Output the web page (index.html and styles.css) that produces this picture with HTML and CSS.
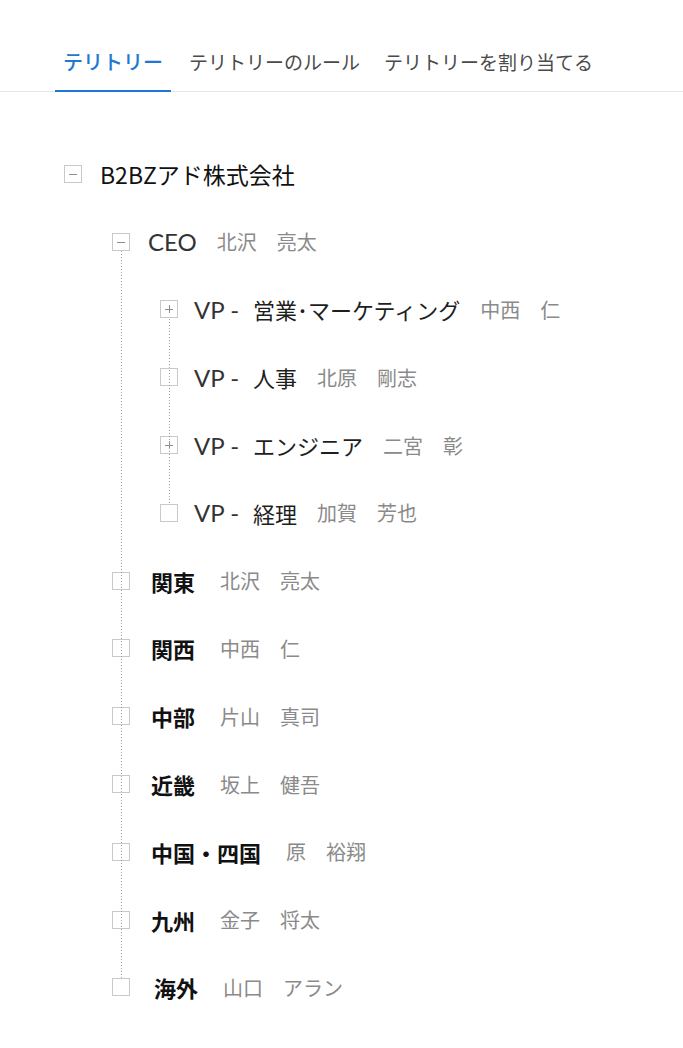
FILE: index.html
```html
<!DOCTYPE html>
<html lang="ja">
<head>
<meta charset="utf-8">
<title>テリトリー</title>
<link rel="stylesheet" href="styles.css">
</head>
<body>
<nav class="tabs">
  <a class="tab active">テリトリー</a>
  <a class="tab">テリトリーのルール</a>
  <a class="tab">テリトリーを割り当てる</a>
</nav>

<main class="tree">
  <div class="row root">
    <svg class="box" width="18" height="18" viewBox="0 0 18 18"><rect x="0.5" y="0.5" width="17" height="17" fill="#fff" stroke="#c9c9c9"/><path d="M5 9.5h8" stroke="#8c8c8c"/></svg>
    <span class="title t-root">B2BZアド株式会社</span>
  </div>

  <div class="branch lvl1">
    <div class="row">
      <svg class="box" width="18" height="18" viewBox="0 0 18 18"><rect x="0.5" y="0.5" width="17" height="17" fill="#fff" stroke="#c9c9c9"/><path d="M5 9.5h8" stroke="#8c8c8c"/></svg>
      <span class="title t-lat">CEO</span>
      <span class="owner">北沢　亮太</span>
    </div>

    <div class="branch lvl2">
      <div class="row">
        <svg class="box" width="18" height="18" viewBox="0 0 18 18"><rect x="0.5" y="0.5" width="17" height="17" fill="#fff" stroke="#c9c9c9"/><path d="M5 9.5h8M9.5 5v8" stroke="#8c8c8c"/></svg>
        <span class="title"><span class="t-lat vp">VP -</span><span class="t-vp">営業･マーケティング</span></span>
        <span class="owner">中西　仁</span>
      </div>
      <div class="row">
        <svg class="box" width="18" height="18" viewBox="0 0 18 18"><rect x="0.5" y="0.5" width="17" height="17" fill="#fff" stroke="#c9c9c9"/></svg>
        <span class="title"><span class="t-lat vp">VP -</span><span class="t-vp">人事</span></span>
        <span class="owner">北原　剛志</span>
      </div>
      <div class="row">
        <svg class="box" width="18" height="18" viewBox="0 0 18 18"><rect x="0.5" y="0.5" width="17" height="17" fill="#fff" stroke="#c9c9c9"/><path d="M5 9.5h8M9.5 5v8" stroke="#8c8c8c"/></svg>
        <span class="title"><span class="t-lat vp">VP -</span><span class="t-vp">エンジニア</span></span>
        <span class="owner">二宮　彰</span>
      </div>
      <div class="row">
        <svg class="box" width="18" height="18" viewBox="0 0 18 18"><rect x="0.5" y="0.5" width="17" height="17" fill="#fff" stroke="#c9c9c9"/></svg>
        <span class="title"><span class="t-lat vp">VP -</span><span class="t-vp">経理</span></span>
        <span class="owner">加賀　芳也</span>
      </div>
    </div>

    <div class="row">
      <svg class="box" width="18" height="18" viewBox="0 0 18 18"><rect x="0.5" y="0.5" width="17" height="17" fill="#fff" stroke="#c9c9c9"/></svg>
      <span class="title t-region">関東</span>
      <span class="owner">北沢　亮太</span>
    </div>
    <div class="row">
      <svg class="box" width="18" height="18" viewBox="0 0 18 18"><rect x="0.5" y="0.5" width="17" height="17" fill="#fff" stroke="#c9c9c9"/></svg>
      <span class="title t-region">関西</span>
      <span class="owner">中西　仁</span>
    </div>
    <div class="row">
      <svg class="box" width="18" height="18" viewBox="0 0 18 18"><rect x="0.5" y="0.5" width="17" height="17" fill="#fff" stroke="#c9c9c9"/></svg>
      <span class="title t-region">中部</span>
      <span class="owner">片山　真司</span>
    </div>
    <div class="row">
      <svg class="box" width="18" height="18" viewBox="0 0 18 18"><rect x="0.5" y="0.5" width="17" height="17" fill="#fff" stroke="#c9c9c9"/></svg>
      <span class="title t-region">近畿</span>
      <span class="owner">坂上　健吾</span>
    </div>
    <div class="row">
      <svg class="box" width="18" height="18" viewBox="0 0 18 18"><rect x="0.5" y="0.5" width="17" height="17" fill="#fff" stroke="#c9c9c9"/></svg>
      <span class="title t-region">中国・四国</span>
      <span class="owner">原　裕翔</span>
    </div>
    <div class="row">
      <svg class="box" width="18" height="18" viewBox="0 0 18 18"><rect x="0.5" y="0.5" width="17" height="17" fill="#fff" stroke="#c9c9c9"/></svg>
      <span class="title t-region">九州</span>
      <span class="owner">金子　将太</span>
    </div>
    <div class="row">
      <svg class="box" width="18" height="18" viewBox="0 0 18 18"><rect x="0.5" y="0.5" width="17" height="17" fill="#fff" stroke="#c9c9c9"/></svg>
      <span class="title t-region t-last">海外</span>
      <span class="owner">山口　アラン</span>
    </div>
  </div>
</main>
</body>
</html>
```
FILE: styles.css
```css
html, body {
  margin: 0;
  padding: 0;
  background: #ffffff;
}

body {
  font-family: "Noto Sans CJK JP", "Noto Sans", sans-serif;
  color: #222;
}

.tabs {
  display: flex;
  gap: 8px;
  height: 91px;
  padding-left: 55px;
  border-bottom: 1px solid #e6e6e6;
}

.tab {
  display: block;
  box-sizing: border-box;
  height: 92px;
  margin-bottom: -1px;
  padding: 48px 8px 0 8px;
  font-size: 19px;
  line-height: 28px;
  color: #4a4a4a;
  border-bottom: 2px solid transparent;
  white-space: nowrap;
}

.tab:nth-child(2) {
  margin-left: 2px;
}

.tab.active {
  font-size: 20px;
  font-weight: 500;
  color: #1f78d1;
  border-bottom-color: #1f78d1;
}

.tree {
  padding-top: 48px;
}

.row {
  display: flex;
  align-items: center;
  height: 67.8px;
  white-space: nowrap;
}

.box {
  flex: none;
  display: block;
  width: 18px;
  height: 18px;
  margin-right: 18px;
}

.root {
  padding-left: 64px;
}

.branch {
  position: relative;
}

.branch::before {
  content: "";
  position: absolute;
  left: 9px;
  top: 43px;
  bottom: 43px;
  width: 1px;
  background: repeating-linear-gradient(to bottom, #a3a3a3 0 1px, transparent 1px 3px);
}

.lvl1 {
  margin-left: 112px;
}

.lvl2 {
  margin-left: 48px;
}

.title {
  display: flex;
  align-items: center;
}

.t-root {
  font-size: 23px;
  color: #111;
}

.t-lat {
  font-family: "Lato", "Noto Sans", sans-serif;
  font-size: 24px;
  color: #333;
}

.vp {
  margin-left: -2px;
  margin-right: 14px;
}

.t-vp {
  font-size: 22px;
  color: #1e1e1e;
}

.t-region {
  font-size: 22px;
  font-weight: 700;
  color: #111;
  padding-left: 3px;
}

.t-last {
  padding-left: 6px;
}

.owner {
  margin-left: 20px;
  font-size: 20px;
  color: #8a8a8a;
}

.t-region + .owner {
  margin-left: 25px;
}
```
